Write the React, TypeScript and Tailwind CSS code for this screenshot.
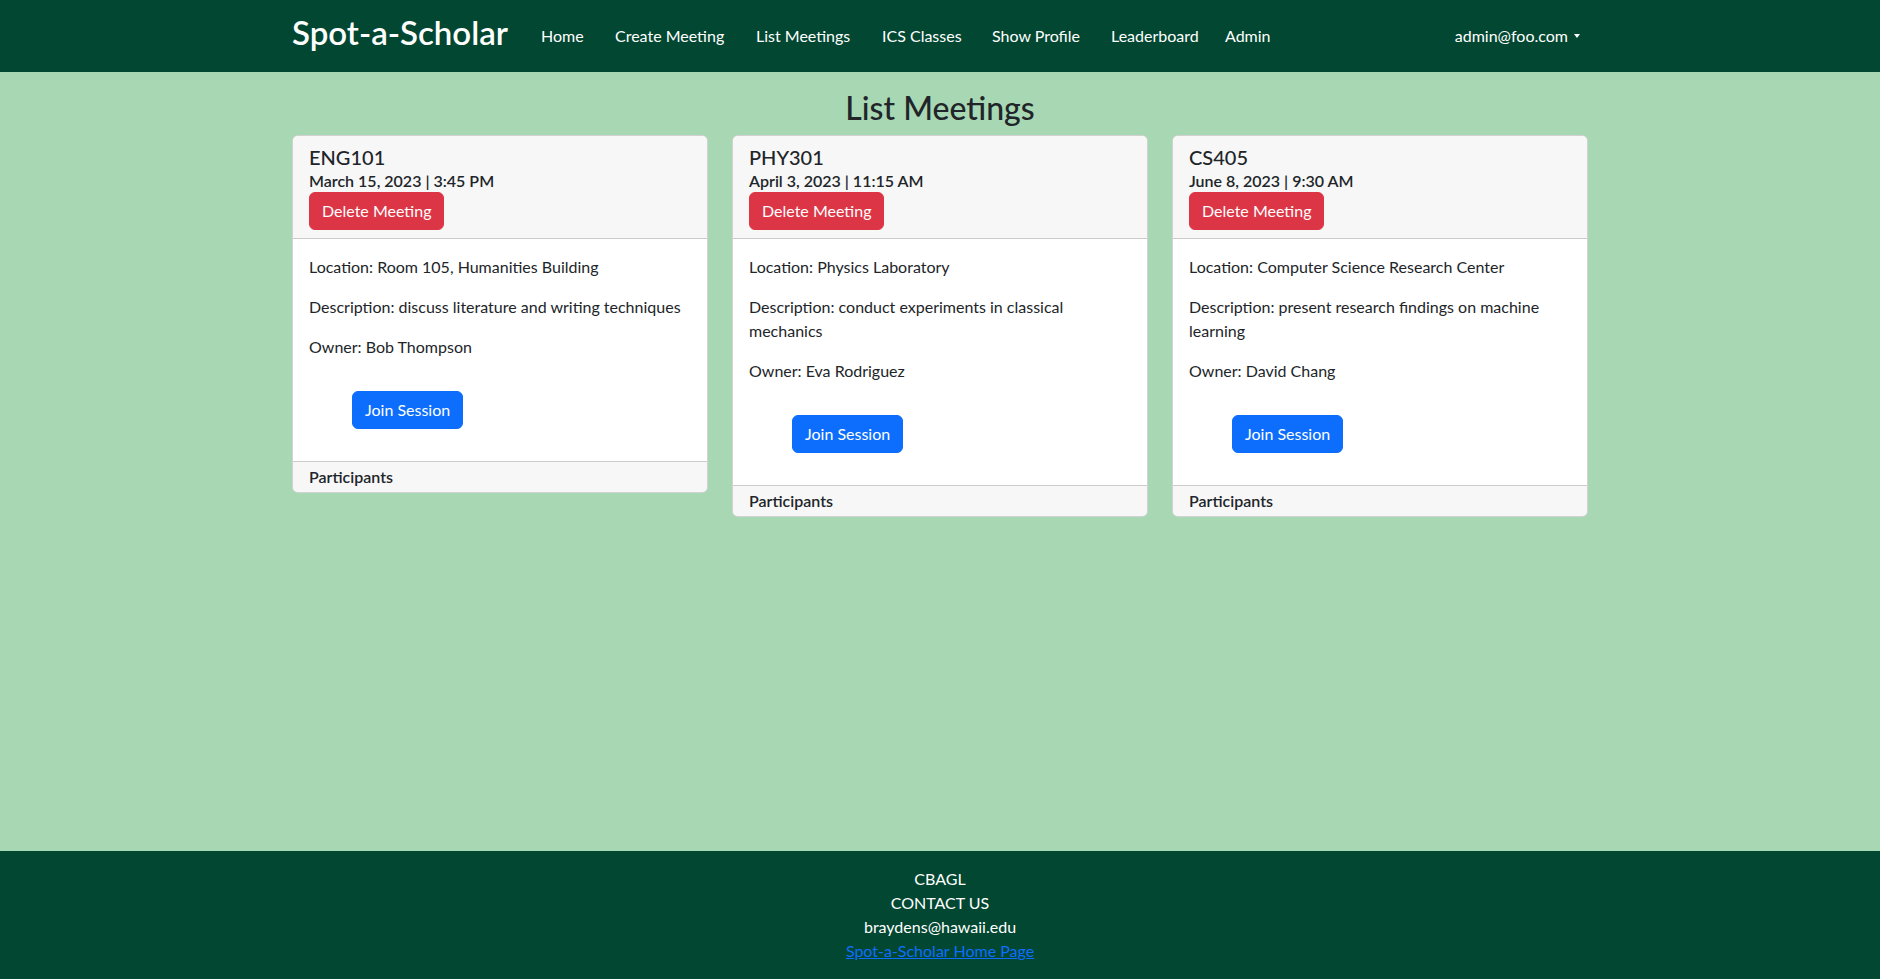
import React from "react";

type Meeting = {
  code: string;
  when: string;
  location: string;
  description: string;
  owner: string;
};

const meetings: Meeting[] = [
  {
    code: "ENG101",
    when: "March 15, 2023 | 3:45 PM",
    location: "Room 105, Humanities Building",
    description: "discuss literature and writing techniques",
    owner: "Bob Thompson",
  },
  {
    code: "PHY301",
    when: "April 3, 2023 | 11:15 AM",
    location: "Physics Laboratory",
    description: "conduct experiments in classical mechanics",
    owner: "Eva Rodriguez",
  },
  {
    code: "CS405",
    when: "June 8, 2023 | 9:30 AM",
    location: "Computer Science Research Center",
    description: "present research findings on machine learning",
    owner: "David Chang",
  },
];

function MeetingCard({ m }: { m: Meeting }) {
  return (
    <div className="flex flex-col overflow-hidden rounded-[6px] border border-black/[0.175] bg-white">
      <div className="flex flex-col items-start border-b border-black/[0.175] bg-[#f7f7f7] px-4 py-2">
        <h5 className="text-[20px] font-medium leading-[26px] text-[#212529]">{m.code}</h5>
        <h6 className="text-[16px] font-semibold leading-[22px] text-[#212529]">{m.when}</h6>
        <button className="rounded-[6px] border border-[#dc3545] bg-[#dc3545] px-3 py-[6px] text-[16px] leading-6 text-white">
          Delete Meeting
        </button>
      </div>
      <div className="flex flex-col p-4 text-[16px] leading-6 text-[#212529]">
        <p className="mb-4">Location: {m.location}</p>
        <p className="mb-4">Description: {m.description}</p>
        <p className="mb-4">Owner: {m.owner}</p>
        <div className="flex py-4 pl-[43px]">
          <button className="rounded-[6px] border border-[#0d6efd] bg-[#0d6efd] px-3 py-[6px] text-[16px] leading-6 text-white">
            Join Session
          </button>
        </div>
      </div>
      <div className="border-t border-black/[0.175] bg-[#f7f7f7] px-4 py-[3px] text-[16px] font-semibold leading-6 text-[#212529]">
        Participants
      </div>
    </div>
  );
}

const navItems: { label: string; w: string }[] = [
  { label: "Home", w: "w-[74px]" },
  { label: "Create Meeting", w: "w-[141px]" },
  { label: "List Meetings", w: "w-[126px]" },
  { label: "ICS Classes", w: "w-[110px]" },
  { label: "Show Profile", w: "w-[119px]" },
  { label: "Leaderboard", w: "w-[114px]" },
  { label: "Admin", w: "w-auto" },
];

export default function App() {
  return (
    <div
      className="flex min-h-screen flex-col bg-[#a7d8b3]"
      style={{ fontFamily: "Lato, 'Noto Sans', sans-serif" }}
    >
      <nav className="h-[72px] bg-[#024731]">
        <div className="mx-auto flex h-full w-[1320px] items-center px-3">
          <a className="mb-2 w-[249px] text-[33px] font-semibold leading-[40px] text-white">Spot-a-Scholar</a>
          <ul className="flex items-center">
            {navItems.map((n) => (
              <li key={n.label} className={`${n.w} text-[16px] leading-6 text-white`}>
                {n.label}
              </li>
            ))}
          </ul>
          <div className="ml-auto flex items-center pr-2 text-[16px] leading-6 text-white">
            <span>admin@foo.com</span>
            <span className="ml-[6px] h-0 w-0 border-x-[3px] border-t-[4px] border-x-transparent border-t-white" />
          </div>
        </div>
      </nav>

      <main className="flex-1">
        <div className="mx-auto w-[1320px] px-3 pt-[17px]">
          <h2 className="mb-2 text-center text-[32px] font-medium leading-[1.2] text-[#212529]">List Meetings</h2>
          <div className="grid grid-cols-3 items-start gap-6">
            {meetings.map((m) => (
              <MeetingCard key={m.code} m={m} />
            ))}
          </div>
        </div>
      </main>

      <footer className="bg-[#024731] py-4 text-center text-[16px] leading-6 text-white">
        <div>CBAGL</div>
        <div>CONTACT US</div>
        <div>braydens@hawaii.edu</div>
        <div>
          <a className="text-[#0d6efd] underline" href="#">
            Spot-a-Scholar Home Page
          </a>
        </div>
      </footer>
    </div>
  );
}
